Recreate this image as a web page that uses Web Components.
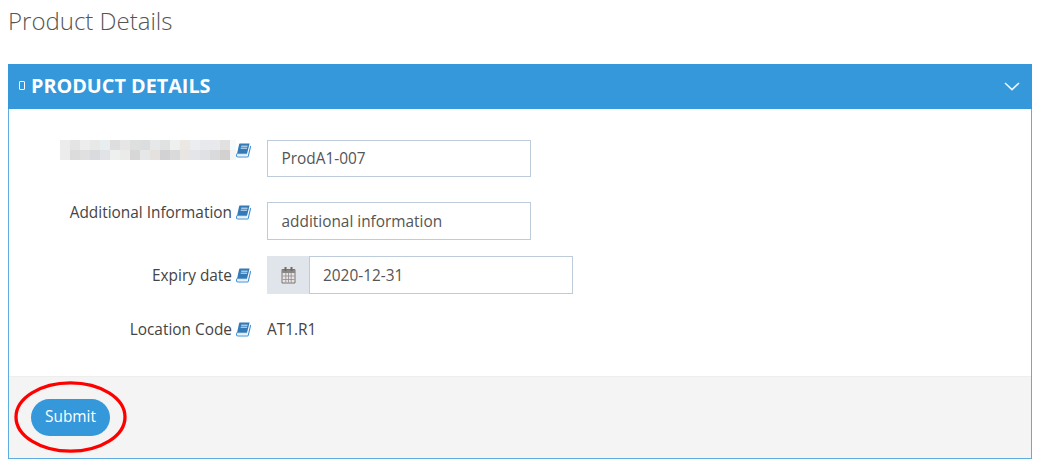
<!DOCTYPE html>
<html lang="en">
<head>
<meta charset="utf-8">
<title>Product Details</title>
<style>
	html, body { margin: 0; background: #fff; }
	body { font-family: "Open Sans", sans-serif; font-size: 15.4px; color: #555; }
</style>
</head>
<body>

<template id="icon-book">
	<style>
		:host { display: inline-block; width: 15px; height: 15px; line-height: 0; }
		svg { width: 15px; height: 15px; display: block; }
	</style>
	<svg viewBox="0 0 15 15">
		<path d="M4 .5H13.6L11 10.8H2.2C1.2 10.8 .9 11.2 .8 11.8L3 1.8C3.2 1 3.5 .5 4 .5Z" fill="#337ab7"/>
		<path d="M.9 10.6 .6 12C.4 13.2 1 14 2 14H11.2C11.8 14 12.1 13.7 12.3 13.1L14.7 3" fill="none" stroke="#3f8fd6" stroke-width="1.1"/>
		<path d="M2.2 11.2H11L10.6 12.6H1.8Z" fill="#cfe3f5"/>
		<path d="M5.2 3.2H11.6M4.7 5.2H11.1" stroke="#dcebf8" stroke-width="1"/>
	</svg>
</template>

<template id="page-title">
	<style>
		:host { display: block; padding: 3px 8px 0; height: 64px; box-sizing: border-box; }
		h1 { margin: 0; font: 300 24px/36px "Open Sans", sans-serif; color: #555; }
	</style>
	<h1><slot></slot></h1>
</template>

<template id="form-panel">
	<style>
		:host { display: block; margin: 0 9px 0 8px; border: 1px solid #5dade2; border-top: 0; }
		header {
			display: flex; align-items: center; justify-content: space-between;
			height: 45px; margin: 0 -1px; padding: 0 12px 0 11px; background: #3498db; color: #fff;
		}
		h2 { display: flex; align-items: center; gap: 6px; margin: 0 0 2px; font: 700 19.8px/26px "Open Sans", sans-serif; text-transform: uppercase; }
		.mobile { flex: none; width: 6px; height: 9px; border: 1.5px solid #fff; border-radius: 1px; box-sizing: border-box; }
		.chevron { width: 16px; height: 9px; display: block; }
		main { height: 267px; box-sizing: border-box; padding-top: 31px; display: flex; flex-direction: column; }
		footer { height: 82px; box-sizing: border-box; padding: 22px 22px; background: #f4f4f4; border-top: 1px solid #eee; }
	</style>
	<header>
		<h2><span class="mobile"></span><slot name="title"></slot></h2>
		<svg class="chevron" viewBox="0 0 16 9"><path d="M1 1 8 7.6 15 1" fill="none" stroke="#fff" stroke-width="1.6" opacity=".9"/></svg>
	</header>
	<main><slot></slot></main>
	<footer><slot name="actions"></slot></footer>
</template>

<template id="form-row">
	<style>
		:host { display: grid; grid-template-columns: 242px 1fr; column-gap: 16px; align-items: start; }
		.label { display: flex; justify-content: flex-end; align-items: center; gap: 4px; height: var(--label-height, 20px); color: #444; white-space: nowrap; }
		.value { display: flex; align-items: center; min-height: var(--label-height, 20px); }
	</style>
	<div class="label"><slot name="label"></slot><icon-book></icon-book></div>
	<div class="value"><slot></slot></div>
</template>

<template id="text-box">
	<style>
		:host { display: flex; width: 264px; height: var(--box-height, 37px); box-sizing: border-box; border: 1px solid #bdcbdb; padding: 0 13.5px; align-items: center; color: #555; background: #fff; }
	</style>
	<slot></slot>
</template>

<template id="date-box">
	<style>
		:host { display: flex; width: 306px; height: 38px; }
		.addon { width: 42px; display: flex; align-items: center; justify-content: center; background: #e0e5eb; flex: none; }
		.addon svg { width: 15px; height: 17px; display: block; }
		.input { flex: 1; box-sizing: border-box; border: 1px solid #bdcbdb; padding: 0 13px; display: flex; align-items: center; color: #555; }
	</style>
	<div class="addon">
		<svg viewBox="0 0 15 17">
			<path d="M1 2.5H14V16H1Z" fill="#e6e4e4" stroke="#7d7772"/>
			<path d="M1 3H14V6H1Z" fill="#8c8783"/>
			<rect x="3.5" y="0" width="2" height="4" fill="#6f6a66"/><rect x="9.5" y="0" width="2" height="4" fill="#6f6a66"/>
			<path d="M1.5 9H13.5M1.5 12.5H13.5M4.8 6V15.5M7.5 6V15.5M10.2 6V15.5" stroke="#8f8b8f" stroke-width=".8"/>
		</svg>
	</div>
	<div class="input"><slot></slot></div>
</template>

<template id="blurred-text">
	<style>
		:host { display: grid; grid-template-columns: repeat(18, 10px); grid-auto-rows: 10px; width: 176px; margin-right: -4px; overflow: hidden; }
		i { display: block; }
	</style>
</template>

<template id="pill-button">
	<style>
		:host { display: inline-flex; align-items: center; justify-content: center; width: 79px; height: 37px; box-sizing: border-box; padding-bottom: 2px; border-radius: 18.5px; background: #3498db; color: #fff; }
	</style>
	<slot></slot>
</template>

<template id="mark-ellipse">
	<style>
		:host { position: absolute; left: 14px; top: 381px; width: 113px; height: 72px; pointer-events: none; }
		svg { width: 100%; height: 100%; display: block; }
	</style>
	<svg viewBox="0 0 113 72"><ellipse cx="56.5" cy="36" rx="54.5" ry="34.2" fill="none" stroke="#f00" stroke-width="3.3"/></svg>
</template>

<page-title>Product Details</page-title>

<form-panel>
	<span slot="title">Product Details</span>

	<form-row style="height:62px">
		<blurred-text slot="label"></blurred-text>
		<text-box>ProdA1-007</text-box>
	</form-row>
	<form-row style="height:54px; --box-height:38px">
		<span slot="label">Additional Information</span>
		<text-box>additional information</text-box>
	</form-row>
	<form-row style="height:54px; --label-height:38px">
		<span slot="label">Expiry date</span>
		<date-box>2020-12-31</date-box>
	</form-row>
	<form-row style="--label-height:38px">
		<span slot="label">Location Code</span>
		<span style="color:#444">AT1.R1</span>
	</form-row>

	<pill-button slot="actions">Submit</pill-button>
</form-panel>

<mark-ellipse></mark-ellipse>

<script>
'use strict';

function stamp(id) {
	const template = document.querySelector('#' + id);
	return class extends HTMLElement {
		constructor() {
			super();
			this.attachShadow({ mode: 'open' });
			this.shadowRoot.appendChild(template.content.cloneNode(true));
		}
	};
}

// the pixelated label from the screenshot
const blurColors = [
	'#ececec', '#e4e4e4', '#ededed', '#e8e8e6', '#e8edf0', '#dedede', '#e6e6e6', '#dedfdf', '#dcdedd', '#e7e8ea', '#e0e1e1', '#eef0f0', '#ebe8e4', '#ecedf0', '#e7e9ec', '#e7e9ec', '#e2e1df', '#f8f9fa',
	'#ececec', '#dcdcdc', '#e0e0e1', '#d9dbde', '#e2e3e6', '#eef0f0', '#ebecea', '#d8d7d8', '#e5e7e9', '#e4e1de', '#d2d2d4', '#d9dad9', '#e8e5e2', '#e4e5e9', '#e0e1e4', '#d9dadc', '#d2d1cf', '#f4f5f5',
];

class BlurredTextElement extends stamp('blurred-text') {
	connectedCallback() {
		if (this.shadowRoot.querySelector('i')) return;
		for (const color of blurColors) {
			const cell = document.createElement('i');
			cell.style.background = color;
			this.shadowRoot.appendChild(cell);
		}
	}
}

customElements.define('icon-book', stamp('icon-book'));
customElements.define('page-title', stamp('page-title'));
customElements.define('form-panel', stamp('form-panel'));
customElements.define('form-row', stamp('form-row'));
customElements.define('text-box', stamp('text-box'));
customElements.define('date-box', stamp('date-box'));
customElements.define('blurred-text', BlurredTextElement);
customElements.define('pill-button', stamp('pill-button'));
customElements.define('mark-ellipse', stamp('mark-ellipse'));
</script>
</body>
</html>
